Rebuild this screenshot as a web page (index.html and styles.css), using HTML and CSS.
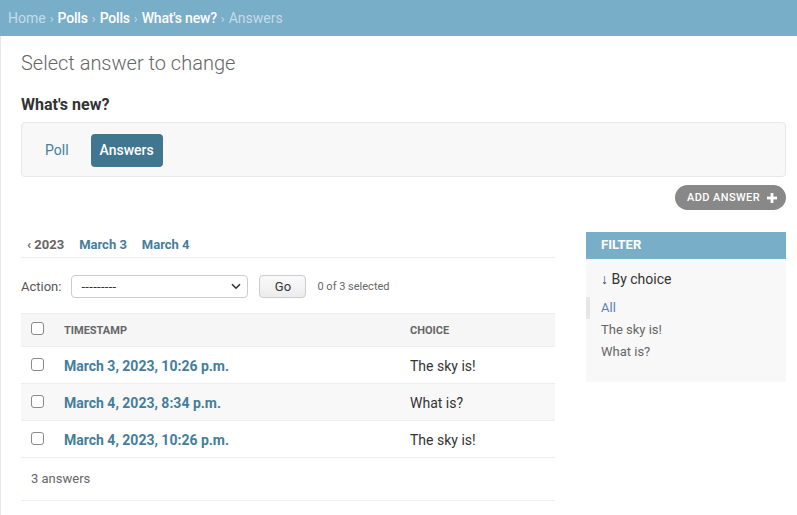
FILE: index.html
```html
<!DOCTYPE html>
<html lang="en">
<head>
<meta charset="utf-8">
<title>Select answer to change</title>
<link rel="stylesheet" href="styles.css">
</head>
<body>
<div class="breadcrumbs">
  <a class="crumb-home" href="#">Home</a><span class="sep">›</span><a href="#">Polls</a><span class="sep">›</span><a href="#">Polls</a><span class="sep">›</span><a href="#">What's new?</a><span class="sep">›</span><span class="current">Answers</span>
</div>
<div class="main">
  <div class="content">
    <h1 class="title">Select answer to change</h1>
    <h2 class="subtitle">What's new?</h2>
    <div class="tabs">
      <a class="tab" href="#">Poll</a>
      <a class="tab tab-active" href="#">Answers</a>
    </div>
    <div class="tools">
      <a class="addlink" href="#">Add answer
        <svg class="plus" width="10" height="10" viewBox="0 0 10 10"><rect x="3.6" y="0" width="2.8" height="10" fill="#fff"/><rect x="0" y="3.6" width="10" height="2.8" fill="#fff"/></svg>
      </a>
    </div>
    <div class="changelist">
      <div class="results-col">
        <div class="datehier">
          <span class="back">‹ 2023</span>
          <a href="#">March 3</a>
          <a href="#">March 4</a>
        </div>
        <div class="actions">
          <label class="action-label">Action:</label>
          <div class="select"><span>---------</span>
            <svg width="10" height="7" viewBox="0 0 10 7"><path d="M1 1.2 L5 5.2 L9 1.2" fill="none" stroke="#333" stroke-width="1.6"/></svg>
          </div>
          <button class="go">Go</button>
          <span class="counter">0 of 3 selected</span>
        </div>
        <table class="results">
          <thead>
            <tr><th class="cb"><span class="box"></span></th><th>Timestamp</th><th class="choice">Choice</th></tr>
          </thead>
          <tbody>
            <tr><td class="cb"><span class="box"></span></td><td><a href="#">March 3, 2023, 10:26 p.m.</a></td><td class="choice">The sky is!</td></tr>
            <tr class="alt"><td class="cb"><span class="box"></span></td><td><a href="#">March 4, 2023, 8:34 p.m.</a></td><td class="choice">What is?</td></tr>
            <tr><td class="cb"><span class="box"></span></td><td><a href="#">March 4, 2023, 10:26 p.m.</a></td><td class="choice">The sky is!</td></tr>
          </tbody>
        </table>
        <p class="paginator">3 answers</p>
      </div>
      <div class="filter">
        <h2 class="filter-head">Filter</h2>
        <h3 class="filter-title"><span class="arrow">↓</span> By choice</h3>
        <ul class="filter-list">
          <li class="selected"><a href="#">All</a></li>
          <li><a href="#">The sky is!</a></li>
          <li><a href="#">What is?</a></li>
        </ul>
      </div>
    </div>
  </div>
</div>
</body>
</html>
```
FILE: styles.css
```css
* { box-sizing: border-box; }
body {
  margin: 0;
  font-family: Roboto, "Liberation Sans", sans-serif;
  color: #333;
  background: #fff;
}
a { text-decoration: none; }

.breadcrumbs {
  height: 36px;
  background: #79aec8;
  padding: 0 8px;
  display: flex;
  align-items: center;
  font-size: 14px;
  color: #c4dce8;
}
.breadcrumbs a { color: #fff; font-weight: 500; letter-spacing: -0.2px; }
.breadcrumbs a.crumb-home { color: #c4dce8; font-weight: 400; letter-spacing: 0; }
.breadcrumbs .sep { margin: 0 4px; font-size: 13px; }
.breadcrumbs .current { color: #c4dce8; }

.main { border-left: 1px solid #e8e8e8; min-height: 479px; }
.content { padding: 15px 11px 0 20px; }

.title {
  margin: 0 0 20px;
  font-size: 20px;
  font-weight: 300;
  color: #666;
  line-height: 24px;
}
.subtitle {
  margin: 0 0 8px;
  font-size: 16px;
  font-weight: 700;
  line-height: 19px;
  color: #333;
}
.tabs {
  background: #f8f8f8;
  border: 1px solid #e8e8e8;
  border-radius: 4px;
  padding: 11px 14px 9px;
  display: flex;
  gap: 13px;
}
.tab {
  font-size: 14px;
  color: #447e9b;
  padding: 0 9px;
  line-height: 33px;
  border-radius: 4px;
}
.tab-active { background: #417690; color: #fff; font-weight: 500; }

.tools { display: flex; justify-content: flex-end; margin-top: 8px; }
.addlink {
  display: flex;
  align-items: center;
  background: #888;
  color: #fff;
  border-radius: 13px;
  height: 25px;
  padding: 0 9px 0 12px;
  font-size: 11px;
  font-weight: 500;
  letter-spacing: 0.4px;
  text-transform: uppercase;
}
.plus { margin-left: 7px; }

.changelist { display: flex; gap: 31px; margin-top: 22px; }
.results-col { flex: 0 0 534px; }

.datehier {
  height: 26px;
  border-bottom: 1px solid #eee;
  display: flex;
  align-items: center;
  gap: 15px;
  padding-left: 6px;
  padding-bottom: 1px;
  font-size: 13px;
  font-weight: 700;
}
.datehier .back { color: #666; }
.datehier a { color: #447e9b; }

.actions {
  display: flex;
  align-items: center;
  margin-top: 16px;
  height: 24px;
  font-size: 13px;
}
.action-label { color: #555; }
.select {
  margin-left: 10px;
  width: 177px;
  height: 23px;
  border: 1px solid #ccc;
  border-radius: 4px;
  display: flex;
  align-items: center;
  justify-content: space-between;
  padding: 0 6px 0 9px;
  font-size: 13px;
  letter-spacing: 0.3px;
  color: #333;
}
.go {
  margin-left: 11px;
  width: 47px;
  height: 23px;
  border: 1px solid #ccc;
  border-radius: 4px;
  background: linear-gradient(#fafafa, #ececec);
  font-family: inherit;
  font-size: 13px;
  color: #333;
  padding: 0;
}
.counter { margin-left: 11px; font-size: 11px; color: #666; }

.results {
  margin-top: 15px;
  width: 100%;
  border-collapse: collapse;
  font-size: 13px;
}
.results th {
  background: #f6f6f6;
  border-top: 1px solid #eee;
  border-bottom: 1px solid #eee;
  height: 33px;
  text-align: left;
  font-size: 11px;
  font-weight: 700;
  color: #666;
  text-transform: uppercase;
  padding: 0;
}
.results td {
  height: 37px;
  border-bottom: 1px solid #eee;
  padding: 1px 0 0;
  font-size: 14px;
  color: #333;
}
.results td a { color: #447e9b; font-weight: 700; font-size: 14px; }
.results tr.alt td { background: #f8f8f8; }
.results .cb { width: 43px; padding-left: 10px; vertical-align: middle; }
.results .choice { width: 145px; }
.box {
  display: block;
  width: 13px;
  height: 13px;
  border: 1px solid #8a8a8a;
  border-radius: 3px;
  background: #fff;
  margin-top: -3px;
}
.paginator {
  margin: 0;
  height: 43px;
  line-height: 42px;
  border-bottom: 1px solid #eee;
  font-size: 13px;
  color: #666;
  padding-left: 10px;
}

.filter {
  flex: 0 0 200px;
  background: #f8f8f8;
  align-self: flex-start;
  height: 150px;
}
.filter-head {
  margin: 0;
  background: #79aec8;
  color: #fff;
  font-size: 13px;
  font-weight: 700;
  text-transform: uppercase;
  height: 27px;
  line-height: 26px;
  padding-left: 15px;
}
.filter-title {
  margin: 11px 0 9px 15px;
  font-size: 14px;
  font-weight: 400;
  color: #333;
  line-height: 18px;
}
.filter-title .arrow { color: #264b5d; font-weight: 700; }
.filter-list { list-style: none; margin: 0; padding: 0; }
.filter-list li {
  font-size: 13px;
  line-height: 22px;
  padding-left: 11px;
  border-left: 4px solid transparent;
}
.filter-list li a { color: #666; }
.filter-list li.selected { border-left-color: #e6e6e6; }
.filter-list li.selected a { color: #5b80b2; }
```
